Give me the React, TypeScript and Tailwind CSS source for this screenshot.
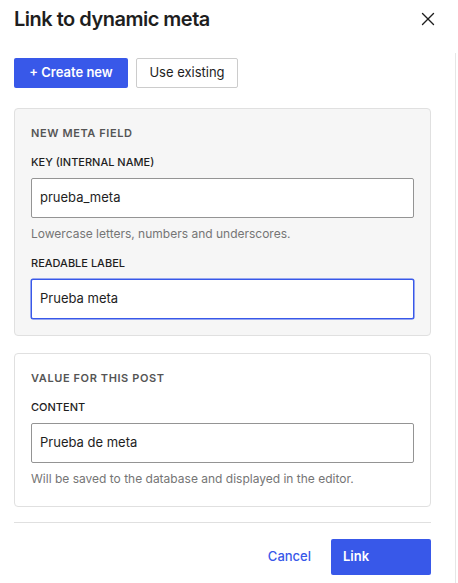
import { X } from 'lucide-react'

const font = { fontFamily: 'Inter, "Liberation Sans", sans-serif' }

function Field({
  label,
  value,
  help,
  focused,
}: {
  label: string
  value: string
  help?: string
  focused?: boolean
}) {
  return (
    <div>
      <p className="text-[11px] leading-4 font-medium uppercase text-[#1e1e1e]">{label}</p>
      <div
        className={
          focused
            ? 'mt-2 h-10 rounded-[2px] border border-[#3858e9] ring-[0.5px] ring-[#3858e9] bg-white px-2 flex items-center text-[13px] text-[#1e1e1e]'
            : 'mt-2 h-10 rounded-[2px] border border-[#949494] bg-white px-2 flex items-center text-[13px] text-[#1e1e1e]'
        }
      >
        {value}
      </div>
      {help && <p className="mt-2 text-[12px] leading-4 text-[#757575]">{help}</p>}
    </div>
  )
}

export default function App() {
  return (
    <div className="w-[458px] h-[583px] bg-white overflow-hidden" style={font}>
      {/* Header */}
      <div className="h-[53px] flex items-start justify-between pl-[14px] pr-[19px] pt-[5px]">
        <h1 className="text-[20px] leading-7 font-semibold text-[#1e1e1e] tracking-[-0.5px]">
          Link to dynamic meta
        </h1>
        <X size={22} strokeWidth={1.5} className="text-[#1e1e1e] mt-[3px]" />
      </div>

      <div className="flex">
        <div className="w-[455px] pl-[14px] pr-[24px]">
          {/* Mode toggle */}
          <div className="flex gap-2 pt-[5px]">
            <button className="h-[30px] w-[114px] rounded-[2px] bg-[#3858e9] text-white text-[13px] font-semibold">
              + Create new
            </button>
            <button className="h-[30px] w-[102px] rounded-[2px] border border-[#cccccc] bg-white text-[#1e1e1e] text-[13px]">
              Use existing
            </button>
          </div>

          {/* New meta field */}
          <div className="mt-5 rounded-[4px] border border-[#e0e0e0] bg-[#f6f6f6] p-4">
            <p className="text-[11px] leading-4 font-semibold uppercase tracking-[0.6px] text-[#555555]">
              New meta field
            </p>
            <div className="mt-[13px] flex flex-col gap-[13px]">
              <Field
                label="Key (internal name)"
                value="prueba_meta"
                help="Lowercase letters, numbers and underscores."
              />
              <Field label="Readable label" value="Prueba meta" focused />
            </div>
          </div>

          {/* Value */}
          <div className="mt-[17px] rounded-[4px] border border-[#e0e0e0] bg-white px-4 pt-4 pb-[19px]">
            <p className="text-[11px] leading-4 font-semibold uppercase tracking-[0.6px] text-[#555555]">
              Value for this post
            </p>
            <div className="mt-[13px]">
              <Field
                label="Content"
                value="Prueba de meta"
                help="Will be saved to the database and displayed in the editor."
              />
            </div>
          </div>

          <div className="mt-[15px] border-t border-[#e0e0e0]" />

          {/* Footer */}
          <div className="mt-4 flex items-center justify-end gap-5">
            <button className="text-[13px] font-medium text-[#3858e9]">Cancel</button>
            <button className="h-9 w-[100px] rounded-[2px] bg-[#3858e9] text-white text-[13px] font-semibold text-left pl-3">
              Link
            </button>
          </div>
        </div>
        <div className="w-px self-stretch h-[530px] bg-[#e6e6e6]" />
      </div>
    </div>
  )
}
